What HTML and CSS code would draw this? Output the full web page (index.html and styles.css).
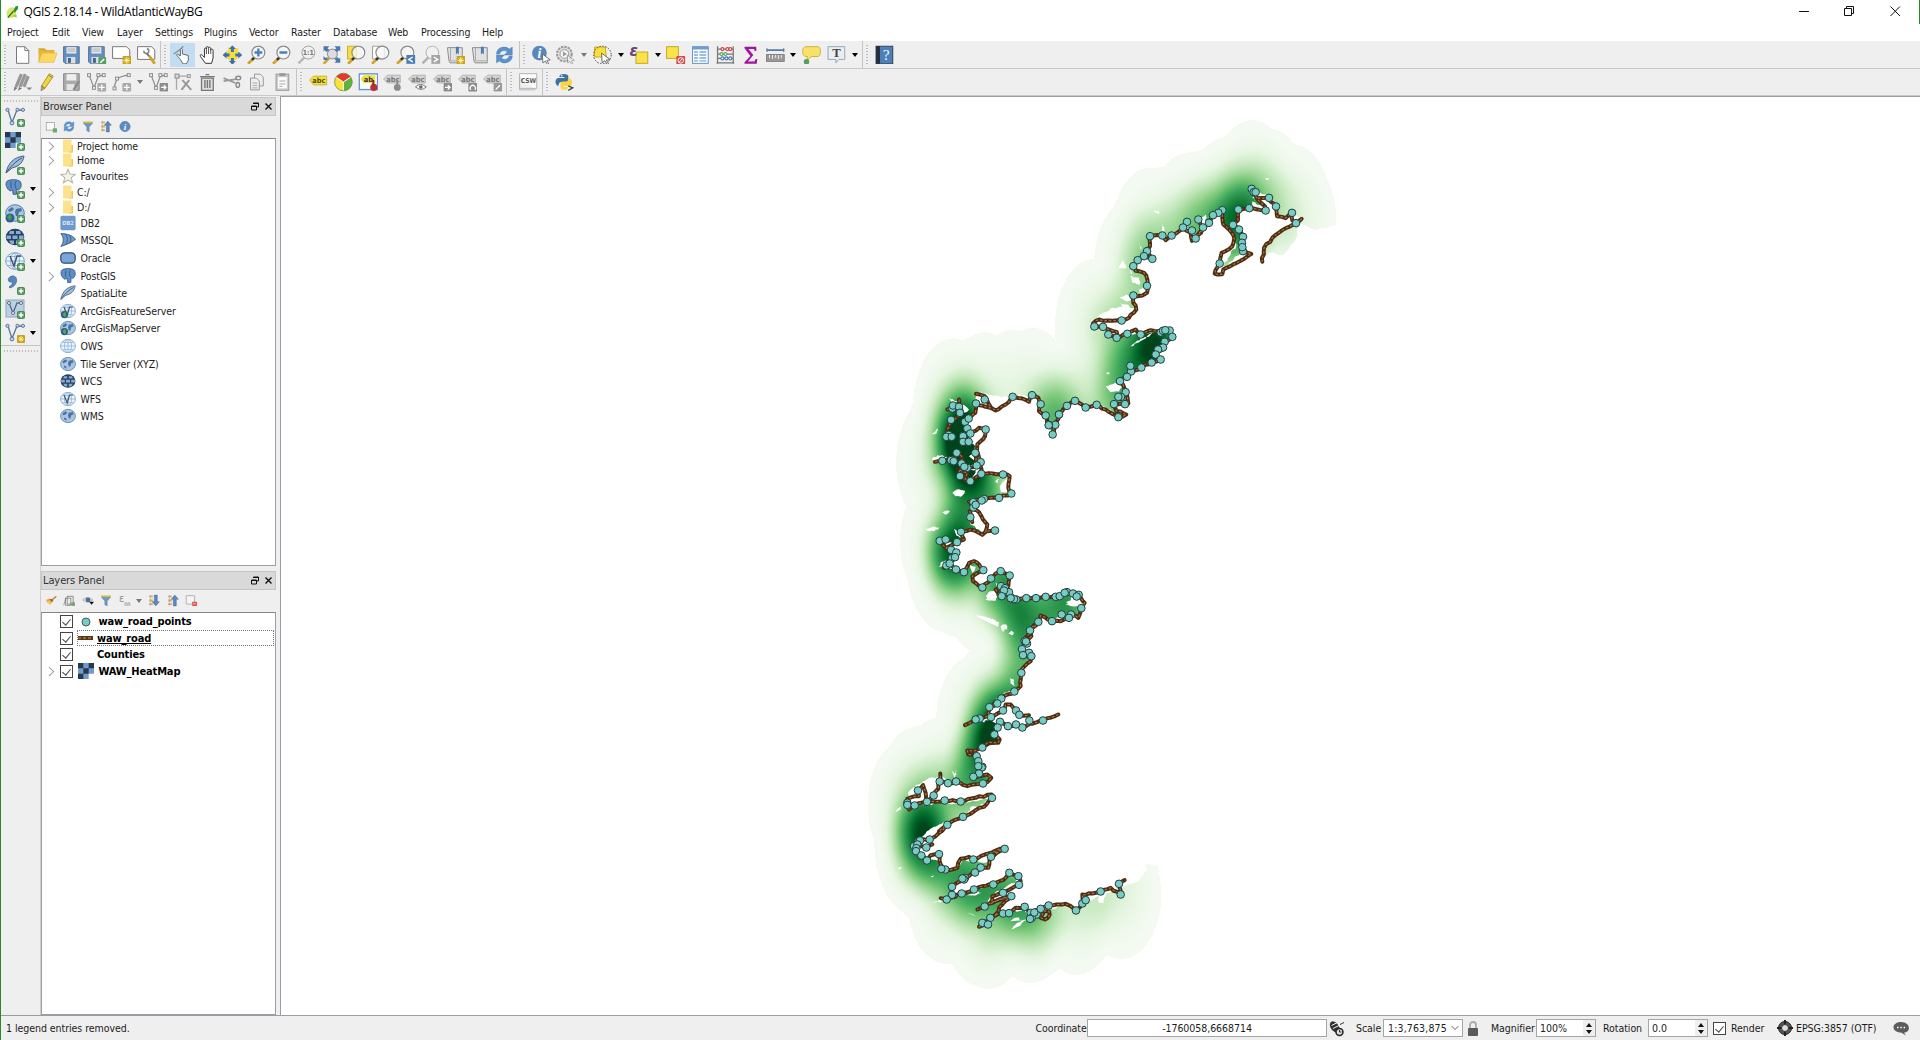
FILE: index.html
```html
<!DOCTYPE html>
<html lang="en">
<head>
<meta charset="utf-8">
<title>QGIS 2.18.14 - WildAtlanticWayBG</title>
<link rel="stylesheet" href="styles.css">
</head>
<body>
<svg class="defs" width="0" height="0" aria-hidden="true">
  <defs>
    <symbol id="b-plus" viewBox="0 0 8 8"><rect x=".5" y=".5" width="7" height="7" rx="1" fill="#5a9e63" stroke="#4b8a54"/><path d="M4 1.600v4.800M1.600 4h4.800" stroke="#fff" stroke-width="1.500"/></symbol>
    <symbol id="b-star" viewBox="0 0 8 8"><rect width="8" height="8" rx="1" fill="#c9a21b"/><path d="M4 1v6M1 4h6M2 2l4 4M6 2L2 6" stroke="#fff3a8" stroke-width=".9"/></symbol>
    <symbol id="b-gray" viewBox="0 0 8 8"><rect width="8" height="8" rx="1" fill="#8d8d8d"/><path d="M1.500 4h4M4 2l2 2-2 2" stroke="#fff" stroke-width="1.200" fill="none"/></symbol>
    <symbol id="b-edit" viewBox="0 0 8 8"><rect width="8" height="8" rx="1" fill="#999"/><path d="M2 6l4-4" stroke="#fff" stroke-width="1.200"/></symbol>
    <symbol id="new" viewBox="0 0 20 20"><path d="M4 1.500h8.500l4 4v13H4z" fill="#fff" stroke="#777"/><path d="M12.500 1.500v4h4" fill="none" stroke="#777"/></symbol>
    <symbol id="open" viewBox="0 0 20 20"><path d="M1 3h6l2 2h8v4H1z" fill="#d9a52a"/><path d="M1 17V5.500h15V17z" fill="#e5b53c"/><path d="M1 17.500L4.500 8H20l-3.500 9.500z" fill="#fbd960" stroke="#e0b040" stroke-width=".6"/></symbol>
    <symbol id="save" viewBox="0 0 20 20"><path d="M2 1.500h16v17H3.500L2 17z" fill="#5f8fc4" stroke="#5b7690"/><rect x="5" y="2" width="10" height="6.500" fill="#e9e9e9"/><path d="M6 4h8M6 6h8" stroke="#aaa"/><rect x="5" y="12" width="9" height="6.500" fill="#ddd"/><rect x="6.500" y="13" width="3" height="5" fill="#44658a"/></symbol>
    <symbol id="saveas" viewBox="0 0 20 20"><use href="#save"/><rect x="12" y="12" width="8" height="8" rx="1" fill="#5a9e63"/><path d="M14 18l4-4" stroke="#fff" stroke-width="1.500"/></symbol>
    <symbol id="compose" viewBox="0 0 20 20"><path d="M1 1.500h14l3.500 3v9H1z" fill="#fff" stroke="#777"/><use href="#b-star" x="11" y="11" width="9" height="9"/></symbol>
    <symbol id="manager" viewBox="0 0 20 20"><path d="M1 1.500h14l3.500 3v10H1z" fill="#fff" stroke="#777"/><path d="M7.500 5.500a2.500 2.500 0 1 0 3-2" fill="none" stroke="#888" stroke-width="1.600"/><path d="M10 8l3 3.500" stroke="#777" stroke-width="2"/><path d="M13 11l5.500 8" stroke="#cfa02e" stroke-width="2.800"/></symbol>
    <symbol id="touch" viewBox="0 0 20 20"><path d="M1 9l6-4 4-4" fill="none" stroke="#8c8c8c" stroke-width="1.300"/><path d="M8 14.500l-4-4.500 1-1 3 2V4.500c0-1.500 2-1.500 2 0v4.500l6 1.500v5l-2 3.500h-3.500z" fill="#fff" stroke="#666"/></symbol>
    <symbol id="pan" viewBox="0 0 20 20"><path d="M8 18.500l-5-7c-1-2 1-2.500 2-1l2 2V4c0-1.500 2-1.500 2 0V2.500c0-1.500 2-1.500 2 0V3c0-1.500 2.300-1.300 2.300.3V5c0-1.300 2.500-1.300 2.500.2V13l-1.500 5.500z" fill="#fff" stroke="#333"/><path d="M9 4v5M11.200 3v6M13.400 5v4" stroke="#555"/></symbol>
    <symbol id="pansel" viewBox="0 0 20 20"><path d="M6 2l10 1-1 11-6 3-6-5z" fill="#f8dd3c"/><g fill="#3c6fae"><path d="M10 0l3.500 4h-2v3h-3V4h-2zM10 20l3.500-4h-2v-3h-3v3h-2zM0 10l4-3.500v2h3v3H4v2zM20 10l-4-3.500v2h-3v3h3v2z"/></g></symbol>
    <symbol id="lens" viewBox="0 0 20 20"><path d="M1.500 19l6-6" stroke="#d3a52c" stroke-width="2.800"/><path d="M5.500 15l2.500-2.500" stroke="#333" stroke-width="2.500"/><circle cx="12" cy="7.500" r="6.600" fill="#f6f6f4" fill-opacity=".8" stroke="#8a8a8a" stroke-width="1.200"/></symbol>
    <symbol id="zin" viewBox="0 0 20 20"><use href="#lens"/><path d="M12 3.500v8M8 7.500h8" stroke="#4b80bd" stroke-width="2.400"/></symbol>
    <symbol id="zout" viewBox="0 0 20 20"><use href="#lens"/><path d="M8 7.500h8" stroke="#4b80bd" stroke-width="2.400"/></symbol>
    <symbol id="z11" viewBox="0 0 20 20"><g opacity=".65"><path d="M2 18.500l6-6" stroke="#999" stroke-width="2.500"/><circle cx="12" cy="7.500" r="6.600" fill="#f0f0f0" stroke="#777"/></g><text x="12" y="10" font-size="7" font-weight="700" fill="#777" text-anchor="middle">1:1</text></symbol>
    <symbol id="zfull" viewBox="0 0 20 20"><path d="M2 19l7-7" stroke="#d3a52c" stroke-width="2.500"/><circle cx="11" cy="9" r="5" fill="#ddd" stroke="#888"/><path d="M2 1h6L6 3l2 2-3 2-2-2-1 2zM19 1h-6l2 2-2 2 3 2 2-2 1 2zM19 18h-6l2-2-2-2 3-2 2 2 1-2zM2 11l2 2 2-1v3H2z" fill="#4878ad"/></symbol>
    <symbol id="zsel" viewBox="0 0 20 20"><rect x="1" y="1" width="9" height="13" fill="#f8de49" stroke="#caae20"/><use href="#lens"/></symbol>
    <symbol id="zlay" viewBox="0 0 20 20"><path d="M2 1h12v13H2z" fill="#fff" stroke="#999"/><use href="#lens"/></symbol>
    <symbol id="zlast" viewBox="0 0 20 20"><use href="#lens"/><rect x="11" y="10" width="9" height="9" fill="#4d7db5"/><path d="M17.500 12l-4 2.500 4 2.500" fill="none" stroke="#fff" stroke-width="1.400"/></symbol>
    <symbol id="znext" viewBox="0 0 20 20"><g opacity=".6"><path d="M2 18.500l6-6" stroke="#888" stroke-width="2.500"/><circle cx="12" cy="7.500" r="6.500" fill="#f2f2f2" stroke="#888"/></g><rect x="11" y="10" width="9" height="9" fill="#a5a5a5"/><path d="M13.500 12l4 2.500-4 2.500" fill="none" stroke="#fff" stroke-width="1.400"/></symbol>
    <symbol id="book" viewBox="0 0 20 20"><path d="M2 2.500h15v15.500H4.500l-1-2L2 4z" fill="#e2e2e2" stroke="#8b8b8b"/><path d="M5 3v13h11" fill="none" stroke="#aaa"/><path d="M10.500 1.500h3v8l-1.500-1.500L10.500 9.500z" fill="#4b7db4"/></symbol>
    <symbol id="booknew" viewBox="0 0 20 20"><use href="#book"/><use href="#b-star" x="11" y="11" width="9" height="9"/></symbol>
    <symbol id="refresh" viewBox="0 0 20 20"><path d="M2 9c0-7 9-9 13-5l3-2v8h-8l3-3c-3-3-7-1-8 2zM18 11c0 7-9 9-13 5l-3 2v-8h8l-3 3c3 3 7 1 8-2z" fill="#5b92cc" stroke="#4a7db5" stroke-width=".5"/></symbol>
    <symbol id="cursor" viewBox="0 0 10 12"><path d="M1 1l8 6-3.500.5 2 3.500-1.500.7-1.800-3.500L1.500 10z" fill="#fff" stroke="#555" stroke-width=".8"/></symbol>
    <symbol id="info" viewBox="0 0 20 20"><circle cx="8" cy="8" r="7.500" fill="#5688bf"/><text x="8" y="13" font-family="Liberation Serif" font-style="italic" font-weight="700" font-size="14" fill="#fff" text-anchor="middle">i</text><use href="#cursor" x="10" y="8" width="10" height="12"/></symbol>
    <symbol id="action" viewBox="0 0 20 20"><circle cx="9" cy="9" r="7.500" fill="#ddd" stroke="#999" stroke-dasharray="2.500 1" stroke-width="2"/><circle cx="9" cy="9" r="4.500" fill="#f5f5f5" stroke="#999"/><path d="M7.500 6.500l4 2.500-4 2.500z" fill="#999"/><use href="#cursor" x="11" y="9" width="9" height="11" opacity=".6"/></symbol>
    <symbol id="select" viewBox="0 0 20 20"><path d="M2 2h11l1 10H2z" fill="#f8df3e" stroke="#c9ac1c"/><circle cx="10" cy="10" r="9" fill="none" stroke="#444" stroke-dasharray="1.500 1.500"/><use href="#cursor" x="8" y="7" width="11" height="13"/></symbol>
    <symbol id="selexp" viewBox="0 0 20 20"><rect x="6.500" y="7" width="12" height="11.500" fill="#fbe14c" stroke="#c6a920"/><text x="0" y="11" font-size="17" font-style="italic" font-weight="700" fill="#69407c">ε</text></symbol>
    <symbol id="desel" viewBox="0 0 20 20"><rect x="1" y="1.500" width="12" height="12" fill="#fbe14c" stroke="#c6a920"/><rect x="11" y="11" width="9" height="9" rx="1" fill="#d9474a"/><circle cx="15.500" cy="15.500" r="2.800" fill="none" stroke="#fff"/><path d="M13.500 17.500l4-4" stroke="#fff"/></symbol>
    <symbol id="table" viewBox="0 0 20 20"><rect x="2" y="1.500" width="16" height="17" fill="#fff" stroke="#5f92c5"/><path d="M2 3h16" stroke="#6c9fd0" stroke-width="3"/><path d="M3.500 7h4M9 7h7M3.500 10h4M9 10h7M3.500 13h4M9 13h7M3.500 16h4M9 16h7" stroke="#7ba9d4" stroke-width="1.500"/></symbol>
    <symbol id="abacus" viewBox="0 0 20 20"><path d="M2 1v18M18 1v18M2 4h16M2 9h16M2 13.500h16M1 18h18" fill="none" stroke="#777" stroke-width="1.300"/><g fill="#fff" stroke-width="1.200"><g stroke="#cc4444"><circle cx="7" cy="4" r="1.500"/><circle cx="12" cy="4" r="1.500"/><circle cx="15" cy="4" r="1.500"/></g><g stroke="#55a868"><circle cx="6" cy="9" r="1.500"/><circle cx="10" cy="9" r="1.500"/></g><g stroke="#477bae"><circle cx="7" cy="13.500" r="1.500"/><circle cx="11" cy="13.500" r="1.500"/><circle cx="15" cy="13.500" r="1.500"/></g></g></symbol>
    <symbol id="sigma" viewBox="0 0 20 20"><path d="M4 1.500h12v4.500h-1.500L13.500 4H8l5 6-5.500 6.500H14l1.500-2.500H17l-.5 5H4v-1.500L10 11 4 3z" fill="#a313a3"/></symbol>
    <symbol id="measure" viewBox="0 0 20 20"><path d="M1 5h18" stroke="#577aa0" stroke-width="1.800"/><path d="M1.500 3v4M18.500 3v4" stroke="#577aa0"/><rect x="1" y="9.500" width="18" height="7" fill="#9a9a9a" stroke="#808080"/><path d="M4 10v3M7 10v4M10 10v3M13 10v4M16 10v3" stroke="#eee"/></symbol>
    <symbol id="tips" viewBox="0 0 20 20"><path d="M4 1.500h13c3 1 3 9 0 10H10l-5 5 1-5H4c-4-1-4-9 0-10z" fill="#f8e16a" stroke="#cdb23d"/><circle cx="5" cy="17" r="2.800" fill="#5b9c5f"/></symbol>
    <symbol id="textann" viewBox="0 0 20 20"><path d="M1.500 1.500h17v13h-6l-3 3.500v-3.500h-8z" fill="#e9eef3" stroke="#98a5b1"/><text x="10" y="12.500" text-anchor="middle" font-family="Liberation Serif" font-weight="700" font-size="13" fill="#444">T</text></symbol>
    <symbol id="help" viewBox="0 0 20 20"><rect x="1.500" y="1" width="17" height="18" fill="#4e7fb8" stroke="#2a3f58"/><rect x="1.500" y="1" width="4" height="18" fill="#26303c"/><text x="12" y="15" text-anchor="middle" font-family="Liberation Serif" font-size="15" fill="#fff">?</text></symbol>
    <symbol id="pencils" viewBox="0 0 20 20"><path d="M3.500 15L9 2M7.500 15L13 2M11.500 15l4.500-11" stroke="#979797" stroke-width="3.200"/><path d="M1 19.500l1-5 3 1.500zM5.500 19l1-4 3 1.500z" fill="#777"/><path d="M14 15.500h6l-3 3z" fill="#888"/></symbol>
    <symbol id="pencil" viewBox="0 0 20 20"><path d="M4 14L12 1.500l4 2.500-8.500 12.500z" fill="#f2d43c" stroke="#a99430"/><path d="M4 14l3.500 2.500L3.500 19z" fill="#d7a05a" stroke="#666" stroke-width=".6"/><path d="M11 3l4 2.500" stroke="#777"/></symbol>
    <symbol id="savegray" viewBox="0 0 20 20"><path d="M2 1.500h16v17H2z" fill="#aaa" stroke="#8e8e8e"/><rect x="5" y="2" width="10" height="6.500" fill="#eee"/><rect x="5" y="12" width="8" height="6.500" fill="#e4e4e4"/><path d="M12 18l6-9" stroke="#888" stroke-width="2"/></symbol>
    <symbol id="vshape" viewBox="0 0 20 20"><path d="M3 4l4.500 12L12 4l5-1" fill="none" stroke="#8e8e8e" stroke-width="1.300"/><g fill="#eee" stroke="#8e8e8e"><rect x="1" y="1.500" width="3" height="3"/><rect x="6" y="14.500" width="3" height="3"/><rect x="10.500" y="1.500" width="3" height="3"/><rect x="16" y="1.500" width="3" height="3"/></g></symbol>
    <symbol id="addf" viewBox="0 0 20 20"><use href="#vshape"/><rect x="11" y="11" width="9" height="9" rx="1.500" fill="#aaa"/><path d="M15.500 12.500v6M12.500 15.500h6" stroke="#fff" stroke-width="1.300"/></symbol>
    <symbol id="addc" viewBox="0 0 20 20"><path d="M3 17C3 8 7 4 17 3" fill="none" stroke="#8e8e8e" stroke-width="1.300"/><g fill="#eee" stroke="#8e8e8e"><rect x="1.500" y="15" width="3" height="3"/><rect x="4" y="5" width="3" height="3"/><rect x="16" y="1.500" width="3" height="3"/></g><rect x="11" y="11" width="9" height="9" rx="1.500" fill="#aaa"/><path d="M15.500 12.500v6M12.500 15.500h6" stroke="#fff" stroke-width="1.300"/></symbol>
    <symbol id="movef" viewBox="0 0 20 20"><use href="#vshape"/><use href="#b-gray" x="11" y="11" width="9" height="9"/></symbol>
    <symbol id="node" viewBox="0 0 20 20"><path d="M3 18V4h14" fill="none" stroke="#aaa" stroke-width="1.400"/><path d="M9 8l9 10M16 8L8 18" fill="none" stroke="#999" stroke-width="2"/><rect x="1.500" y="2" width="4" height="4" fill="#ddd" stroke="#888"/><rect x="14" y="2.500" width="3" height="3" fill="#ddd" stroke="#999"/></symbol>
    <symbol id="trash" viewBox="0 0 20 20"><path d="M4 6h12v12.500H4z" fill="#ddd" stroke="#777" stroke-width="1.300"/><path d="M2.500 4.500h15M8 2.500h4M7.500 8v8M10 8v8M12.500 8v8" stroke="#777" stroke-width="1.400"/></symbol>
    <symbol id="cut" viewBox="0 0 20 20"><path d="M1 6l12 5M1 9l13-2" stroke="#999" stroke-width="1.800"/><ellipse cx="16" cy="6" rx="2.500" ry="1.800" fill="none" stroke="#888" stroke-width="1.400"/><ellipse cx="15.500" cy="13" rx="1.800" ry="2.500" fill="none" stroke="#888" stroke-width="1.400"/></symbol>
    <symbol id="copy" viewBox="0 0 20 20"><path d="M7 2h6l3 3v9H7z" fill="#eee" stroke="#999"/><path d="M3 6h6l3 3v9H3z" fill="#eee" stroke="#999"/><path d="M5 11h5M5 13.500h5M5 16h5" stroke="#aaa"/></symbol>
    <symbol id="paste" viewBox="0 0 20 20"><rect x="3.500" y="2" width="13" height="16.500" fill="#ccc" stroke="#999"/><rect x="5.500" y="5" width="9" height="11.500" fill="#fafafa"/><path d="M7 9h6M7 12h6M7 14.500h3" stroke="#aaa"/><rect x="7" y="1" width="6" height="3" fill="#999"/></symbol>
    <symbol id="label" viewBox="0 0 20 20"><path d="M1 8l4-4h13.500v9H5z" fill="#f4df3d" stroke="#c5ad2a" stroke-width=".8"/><text x="10.500" y="11.500" text-anchor="middle" font-size="7.500" font-weight="700" fill="#554a12">abc</text></symbol>
    <symbol id="diagram" viewBox="0 0 20 20"><circle cx="10" cy="10" r="9" fill="#f6e43a"/><path d="M10 10L2.500 5A9 9 0 0 1 17.500 5z" fill="#e33b2e"/><path d="M10 10v9A9 9 0 0 1 2.500 5z" fill="#5bb441" transform="matrix(-1 0 0 1 20 0)"/><path d="M10 19v-9L2.500 5M10 10l7.500-5" stroke="#fff" fill="none"/><circle cx="10" cy="10" r="9" fill="none" stroke="#7a8c3a" stroke-width=".8"/></symbol>
    <symbol id="labpin" viewBox="0 0 20 20"><rect x=".7" y="1.700" width="18.600" height="16" fill="#fff" stroke="#5f97dc" stroke-width="1.400"/><path d="M2 7l3-4h12v8H5z" fill="#f4df3d"/><text x="10" y="9.500" text-anchor="middle" font-size="7.500" font-weight="700" fill="#333">ab</text><circle cx="15.500" cy="15.500" r="3.600" fill="#bf2d2d"/><path d="M15 8v5" stroke="#8d2222" stroke-width="2"/></symbol>
    <symbol id="labgray" viewBox="0 0 20 20"><path d="M1 7l4-4h13v8H5z" fill="#d2d2d2" stroke="#b5b5b5"/><text x="10.500" y="9.800" text-anchor="middle" font-size="7.500" font-weight="700" fill="#777">abc</text></symbol>
    <symbol id="lg1" viewBox="0 0 20 20"><use href="#labgray"/><circle cx="15" cy="15.500" r="3.500" fill="#8b8b8b"/><path d="M15 8v5" stroke="#8b8b8b" stroke-width="2"/></symbol>
    <symbol id="lg2" viewBox="0 0 20 20"><use href="#labgray"/><path d="M8 15q5-5 11 0q-5 5-11 0z" fill="#fff" stroke="#777"/><circle cx="13.500" cy="15" r="1.800" fill="#666"/></symbol>
    <symbol id="lg3" viewBox="0 0 20 20"><use href="#labgray"/><use href="#b-gray" x="11" y="11" width="9" height="9"/></symbol>
    <symbol id="lg4" viewBox="0 0 20 20"><use href="#labgray"/><rect x="11" y="11" width="9" height="9" rx="1" fill="#8d8d8d"/><path d="M13.500 18a2.700 2.700 0 1 1 4 0" fill="none" stroke="#fff" stroke-width="1.300"/></symbol>
    <symbol id="lg5" viewBox="0 0 20 20"><use href="#labgray"/><use href="#b-edit" x="11" y="11" width="9" height="9"/></symbol>
    <symbol id="csw" viewBox="0 0 20 20"><path d="M1 4v14h16M1 1.500h17.500v15H1z" fill="#fdfdfd" stroke="#b2b2b2"/><text x="10" y="11.500" text-anchor="middle" font-size="6.800" font-weight="700" fill="#555">CSW</text></symbol>
    <symbol id="python" viewBox="0 0 20 20"><path d="M5 4c0-3 9-3 9 0v4c0 2-1.500 2-3 2H7c-2 0-3 1.500-3 4-4 0-4-8 0-8h6V5H5z" fill="#3a72a6"/><path d="M14 6c5 0 5 8 1 8h-6v1h5c0 4-8 4-8 0v-3c0-2 1-2.500 3-2.500h3c2 0 2-2 2-3.500z" fill="#fcd441"/><circle cx="7.300" cy="3.600" r=".8" fill="#fff"/><path d="M14 14l4.500 2-4.500 2.500" fill="none" stroke="#444" stroke-width="1.300"/></symbol>
    <symbol id="vec" viewBox="0 0 20 20"><path d="M3 3l4 12.500L12 3h6" fill="none" stroke="#5a7690" stroke-width="1.300"/><g fill="#bcd3ea" stroke="#4d6f92" stroke-width=".9"><circle cx="2.500" cy="2.800" r="1.600"/><circle cx="7" cy="16" r="1.900"/><circle cx="12.500" cy="2.800" r="1.600"/><circle cx="18" cy="2.800" r="1.600"/></g></symbol>
    <symbol id="a-vec" viewBox="0 0 20 20"><use href="#vec"/><use href="#b-plus" x="12" y="12" width="8" height="8"/></symbol>
    <symbol id="ras" viewBox="0 0 15 15"><path d="M0 0h15v10h-5v5H0z" fill="#6f9bcd"/><path d="M0 0h5v5H0zM10 0h5v5h-5zM5 5h5v5H5zM0 10h5v5H0z" fill="#27384c"/></symbol>
    <symbol id="a-ras" viewBox="0 0 20 20"><use href="#ras" x="0" y="1" width="16" height="16"/><use href="#b-plus" x="12" y="12" width="8" height="8"/></symbol>
    <symbol id="feather" viewBox="0 0 20 20"><path d="M1 18C3 8 9 2 19 1c-1 6-4 10-12 12z" fill="#9dbddd" stroke="#3f5f82"/><path d="M1 18C5 12 11 6 17 3" fill="none" stroke="#38506c"/></symbol>
    <symbol id="a-fea" viewBox="0 0 20 20"><use href="#feather"/><use href="#b-plus" x="12" y="12" width="8" height="8"/></symbol>
    <symbol id="pg" viewBox="0 0 20 20"><path d="M2 3c3-3 13-3 16 0 2 4 1 8-2 10l-2-1-.5 6h-4l-.5-5-3 1C2 12 0 6 2 3z" fill="#5e8fc6" stroke="#34557b"/><path d="M7 3v8M13 2.500c-2 3-1 6 0 9" fill="none" stroke="#34557b"/></symbol>
    <symbol id="a-pg" viewBox="0 0 20 20"><use href="#pg" width="17" height="17"/><use href="#b-plus" x="12" y="12" width="8" height="8"/></symbol>
    <symbol id="globe" viewBox="0 0 20 20"><ellipse cx="10" cy="10" rx="9.300" ry="8.300" fill="#a9c6e4" stroke="#5780aa"/><path d="M3 7l4-3 2 2-2 2-3 1zM11 6l5-1 1 3-3 1-1 4-2 0-1-4zM5 12l3 1v3l-3-2z" fill="#4b739e"/></symbol>
    <symbol id="grid" viewBox="0 0 20 20"><ellipse cx="10" cy="10" rx="9.300" ry="8.300" fill="#edf4fb" stroke="#6f9fd0"/><path d="M1 10h18M10 2v16M3 5.500h14M3 14.500h14" stroke="#8db4dc" fill="none"/><ellipse cx="10" cy="10" rx="4.500" ry="8.300" fill="none" stroke="#8db4dc"/></symbol>
    <symbol id="wcs" viewBox="0 0 20 20"><ellipse cx="10" cy="10" rx="9.300" ry="8.300" fill="#27415e"/><path d="M5 4h4v3H4zM11 4h4l1 3h-5zM1.500 8.500H6v3.500H1.500zM7.500 8.500h5V12h-5zM14 8.500h4.500V12H14zM4 13.500h5V17H6zM11 13.500h5L14 17h-3z" fill="#86abd4"/></symbol>
    <symbol id="a-wms" viewBox="0 0 20 20"><use href="#globe"/><circle cx="5" cy="15" r="4.500" fill="#2a6098"/><path d="M2 14l3-3 2 3-2 4z" fill="#4b9c45"/><use href="#b-plus" x="12" y="12" width="8" height="8"/></symbol>
    <symbol id="a-wcs" viewBox="0 0 20 20"><use href="#wcs"/><use href="#b-plus" x="12" y="12" width="8" height="8"/></symbol>
    <symbol id="wfs" viewBox="0 0 20 20"><use href="#grid"/><path d="M5 5l4 10 3-10h4" fill="none" stroke="#40556d" stroke-width="1.500"/></symbol>
    <symbol id="a-wfs" viewBox="0 0 20 20"><use href="#wfs"/><use href="#b-plus" x="12" y="12" width="8" height="8"/></symbol>
    <symbol id="a-csv" viewBox="0 0 20 20"><path d="M7 1c6-1 7 9-2 12l-1-1c3-2 4-4 3-5C2 8 2 2 7 1z" fill="#5686bd" stroke="#3d638f" stroke-width=".7"/><use href="#b-plus" x="12" y="12" width="8" height="8"/></symbol>
    <symbol id="a-vir" viewBox="0 0 20 20"><rect x="1" y="1" width="18" height="17" fill="#bdd0e3" stroke="#8fa5bb"/><path d="M4 4l4 10 4-10h4" fill="none" stroke="#516b86" stroke-width="1.300"/><g fill="#fff" stroke="#516b86"><circle cx="4" cy="4" r="1.500"/><circle cx="8" cy="14" r="1.500"/><circle cx="16" cy="4" r="1.500"/></g><use href="#b-plus" x="12" y="12" width="8" height="8"/></symbol>
    <symbol id="a-new" viewBox="0 0 20 20"><use href="#vec"/><use href="#b-star" x="12" y="12" width="8" height="8"/></symbol>
    <symbol id="arcm" viewBox="0 0 20 20"><use href="#globe"/><circle cx="5.500" cy="14.500" r="4.500" fill="#2a5f88"/><path d="M3 14l3-3 2 3-2 4z" fill="#57a650"/></symbol>
    <symbol id="arcf" viewBox="0 0 20 20"><use href="#wfs"/><circle cx="5.500" cy="14.500" r="4.500" fill="#2a5f88"/><path d="M3 14l3-3 2 3-2 4z" fill="#57a650"/></symbol>
    <symbol id="folder" viewBox="0 0 16 14"><path d="M4 .5h8.500V6h1.500v7.500H4z" fill="#fbe38c"/><path d="M12.500 6H14v7.500h-4v-1h2.500z" fill="#efc85a"/></symbol>
    <symbol id="star" viewBox="0 0 20 20"><path d="M10 1.500l2.500 6 6.500.5-5 4 1.700 6.500L10 15l-5.700 3.500L6 12 1 8l6.500-.5z" fill="#f4f3ea" stroke="#b9b79f" stroke-width="1.300"/></symbol>
    <symbol id="db2" viewBox="0 0 20 20"><rect x=".5" y="1" width="19" height="18" rx="2" fill="#6c98cc"/><text x="10" y="12.500" text-anchor="middle" font-size="7" font-weight="700" fill="#d8e5f3">DB2</text></symbol>
    <symbol id="mssql" viewBox="0 0 20 20"><path d="M1 2c8 0 14 2 18.500 7C15 13 8 16 1 18c4-5 4-11 0-16z" fill="#6c98cc" stroke="#34506f"/><path d="M7 3c3 4 3 9 0 13M12 5c2 3 2 6 0 9" fill="none" stroke="#34506f"/></symbol>
    <symbol id="oracle" viewBox="0 0 20 20"><rect x="1" y="3.500" width="18" height="13" rx="4.500" fill="#7aa5d6" stroke="#2e4c6e" stroke-width="1.500"/></symbol>
    <symbol id="addlay" viewBox="0 0 20 20"><rect x="2" y="3" width="14" height="13" fill="#fafafa" stroke="#888"/><rect x="13" y="13" width="7" height="7" fill="#6ba872"/></symbol>
    <symbol id="filter" viewBox="0 0 20 20"><path d="M2 4h16l-6 7v8l-4-2v-6z" fill="#6b99cc" stroke="#55799f" stroke-width=".7"/><path d="M2 3h16" stroke="#d2c23a" stroke-width="3"/></symbol>
    <symbol id="collapse" viewBox="0 0 20 20"><path d="M2 3h6M2 16h6M2 10h6" stroke="#d9a94c" stroke-width="3"/><path d="M4 1v18" stroke="#aaa"/><path d="M13 1l6 7h-3.500v11h-5V8H7z" fill="#5b88bd" stroke="#3c618c" stroke-width=".7"/></symbol>
    <symbol id="expand" viewBox="0 0 20 20"><path d="M2 3h6M2 16h6M2 10h6" stroke="#d9a94c" stroke-width="3"/><path d="M4 1v18" stroke="#aaa"/><path d="M13 19l6-7h-3.500V1h-5v11H7z" fill="#5b88bd" stroke="#3c618c" stroke-width=".7"/></symbol>
    <symbol id="infos" viewBox="0 0 20 20"><circle cx="10" cy="10" r="8.500" fill="#5b8cc3" stroke="#426d9d"/><text x="10" y="15" font-family="Liberation Serif" font-style="italic" font-weight="700" font-size="15" fill="#fff" text-anchor="middle">i</text></symbol>
    <symbol id="brush" viewBox="0 0 20 20"><path d="M1 9l6-2 5 5-3 5z" fill="#f0a13a"/><path d="M2 13l5 3 4-1-3-5z" fill="#e8cf4b"/><path d="M7 8l4-1 3 3-2 3z" fill="#c7504c"/><path d="M12 9l7-6" stroke="#b98a45" stroke-width="2.500"/></symbol>
    <symbol id="group" viewBox="0 0 20 20"><path d="M7 3h10v13H7zM4 6h9v12H4z" fill="#eee" stroke="#777" stroke-width="1.300"/><path d="M1 18l4-12" stroke="#777"/><rect x="14" y="13" width="6" height="6" fill="#6ba872"/></symbol>
    <symbol id="eye" viewBox="0 0 20 20"><path d="M1 9q8-8 17 0q-8 8-17 0z" fill="#ddd" stroke="#999"/><circle cx="10" cy="9" r="4" fill="#4e7398"/><path d="M12 12h8l-4 5z" fill="#111"/></symbol>
    <symbol id="eps" viewBox="0 0 20 20"><text x="0" y="12" font-size="18" fill="#888">ε</text><path d="M10 19v-5h3v5M15 19v-5h3v5" fill="none" stroke="#999" stroke-width="1.300"/></symbol>
    <symbol id="remove" viewBox="0 0 20 20"><rect x="2" y="2" width="14" height="14" rx="1" fill="#f4f4f4" stroke="#888"/><rect x="12" y="12" width="8" height="7" rx="1" fill="#e0504f"/><path d="M13.500 15.500h5" stroke="#fff"/></symbol>
  </defs>
</svg>

<div class="window">
  <header class="title">
    <svg class="logo" viewBox="0 0 20 20"><ellipse cx="9" cy="11" rx="6.500" ry="8" fill="#d7e76a" transform="rotate(25 9 11)"/><path d="M4 18l8-9" stroke="#2d6b2a" stroke-width="2"/><path d="M12 8l3-6 4-1-1 5-4 5z" fill="#2f8b2c"/><path d="M9 16l7-3 1 5z" fill="#a9cc45"/></svg>
    <span class="title-text">QGIS 2.18.14 - WildAtlanticWayBG</span>
    <svg class="winbtns" viewBox="0 0 110 24" fill="none" stroke="#111"><path d="M4 11.500h10"/><path d="M49.500 8.500h7v7h-7zM51.500 8.500v-2h7v7h-2"/><path d="M95.500 6.500l9.500 9.500M105 6.500l-9.500 9.500"/></svg>
  </header>
  <nav class="menu"><span class="m1">Project</span><span class="m2">Edit</span><span class="m3">View</span><span class="m4">Layer</span><span class="m5">Settings</span><span class="m6">Plugins</span><span class="m7">Vector</span><span class="m8">Raster</span><span class="m9">Database</span><span class="m10">Web</span><span class="m11">Processing</span><span>Help</span></nav>

  <div class="bar">
    <div class="grp"><i class="grip"></i><svg class="ic"><use href="#new"/></svg><svg class="ic"><use href="#open"/></svg><svg class="ic"><use href="#save"/></svg><svg class="ic"><use href="#saveas"/></svg><svg class="ic"><use href="#compose"/></svg><svg class="ic"><use href="#manager"/></svg></div>
    <div class="grp"><i class="grip"></i><svg class="ic on"><use href="#touch"/></svg><svg class="ic"><use href="#pan"/></svg><svg class="ic"><use href="#pansel"/></svg><svg class="ic"><use href="#zin"/></svg><svg class="ic"><use href="#zout"/></svg><svg class="ic"><use href="#z11"/></svg><svg class="ic"><use href="#zfull"/></svg><svg class="ic"><use href="#zsel"/></svg><svg class="ic"><use href="#zlay"/></svg><svg class="ic"><use href="#zlast"/></svg><svg class="ic"><use href="#znext"/></svg><svg class="ic"><use href="#booknew"/></svg><svg class="ic"><use href="#book"/></svg><svg class="ic"><use href="#refresh"/></svg></div>
    <div class="grp"><i class="grip"></i><svg class="ic"><use href="#info"/></svg><svg class="ic"><use href="#action"/></svg><i class="dd dim"></i><svg class="ic"><use href="#select"/></svg><i class="dd"></i><svg class="ic"><use href="#selexp"/></svg><i class="dd"></i><svg class="ic"><use href="#desel"/></svg><svg class="ic"><use href="#table"/></svg><svg class="ic"><use href="#abacus"/></svg><svg class="ic"><use href="#sigma"/></svg><svg class="ic"><use href="#measure"/></svg><i class="dd"></i><svg class="ic"><use href="#tips"/></svg><svg class="ic"><use href="#textann"/></svg><i class="dd"></i></div>
    <div class="grp last"><i class="grip"></i><svg class="ic"><use href="#help"/></svg></div>
  </div>
  <div class="bar">
    <div class="grp"><i class="grip"></i><svg class="ic"><use href="#pencils"/></svg><svg class="ic"><use href="#pencil"/></svg><svg class="ic"><use href="#savegray"/></svg><svg class="ic"><use href="#addf"/></svg><svg class="ic"><use href="#addc"/></svg><i class="dd dim"></i><svg class="ic"><use href="#movef"/></svg><svg class="ic"><use href="#node"/></svg><svg class="ic"><use href="#trash"/></svg><svg class="ic"><use href="#cut"/></svg><svg class="ic"><use href="#copy"/></svg><svg class="ic"><use href="#paste"/></svg></div>
    <div class="grp"><i class="grip"></i><svg class="ic"><use href="#label"/></svg><svg class="ic"><use href="#diagram"/></svg><svg class="ic"><use href="#labpin"/></svg><svg class="ic"><use href="#lg1"/></svg><svg class="ic"><use href="#lg2"/></svg><svg class="ic"><use href="#lg3"/></svg><svg class="ic"><use href="#lg4"/></svg><svg class="ic"><use href="#lg5"/></svg></div>
    <div class="grp"><i class="grip"></i><svg class="ic"><use href="#csw"/></svg></div>
    <div class="grp last"><i class="grip"></i><svg class="ic"><use href="#python"/></svg></div>
  </div>

  <main class="body">
    <aside class="side">
      <i class="hgrip"></i>
      <div class="si"><svg><use href="#a-vec"/></svg></div><div class="si"><svg><use href="#a-ras"/></svg></div><div class="si"><svg><use href="#a-fea"/></svg></div><div class="si"><svg><use href="#a-pg"/></svg><i class="dd"></i></div><div class="si"><svg><use href="#a-wms"/></svg><i class="dd"></i></div><div class="si"><svg><use href="#a-wcs"/></svg></div><div class="si"><svg><use href="#a-wfs"/></svg><i class="dd"></i></div><div class="si"><svg><use href="#a-csv"/></svg></div><div class="si"><svg><use href="#a-vir"/></svg></div><div class="si"><svg><use href="#a-new"/></svg><i class="dd"></i></div>
      <i class="rule"></i><i class="hgrip"></i>
    </aside>
    <div class="docks">
      <section class="dock browser">
        <h2>Browser Panel<svg class="dockbtns" viewBox="0 0 24 10"><path d="M2.500 1h5v4h-1.500M.5 4h5v4h-5zM0 4.500h6M2 1.500h6" fill="none" stroke="#111"/><path d="M14.500 1.500l6 6M20.500 1.500l-6 6" stroke="#111" stroke-width="1.400"/></svg></h2>
        <div class="tools"><svg><use href="#addlay"/></svg><svg><use href="#refresh"/></svg><svg><use href="#filter"/></svg><svg><use href="#collapse"/></svg><svg><use href="#infos"/></svg></div>
        <ul class="tree">
          <li class="f x"><svg><use href="#folder"/></svg>Project home</li>
          <li class="f x"><svg><use href="#folder"/></svg>Home</li>
          <li><svg><use href="#star"/></svg>Favourites</li>
          <li class="f x"><svg><use href="#folder"/></svg>C:/</li>
          <li class="f x"><svg><use href="#folder"/></svg>D:/</li>
          <li><svg><use href="#db2"/></svg>DB2</li>
          <li><svg><use href="#mssql"/></svg>MSSQL</li>
          <li><svg><use href="#oracle"/></svg>Oracle</li>
          <li class="x"><svg><use href="#pg"/></svg>PostGIS</li>
          <li><svg><use href="#feather"/></svg>SpatiaLite</li>
          <li><svg><use href="#arcf"/></svg>ArcGisFeatureServer</li>
          <li><svg><use href="#arcm"/></svg>ArcGisMapServer</li>
          <li><svg><use href="#grid"/></svg>OWS</li>
          <li><svg><use href="#globe"/></svg>Tile Server (XYZ)</li>
          <li><svg><use href="#wcs"/></svg>WCS</li>
          <li><svg><use href="#wfs"/></svg>WFS</li>
          <li><svg><use href="#globe"/></svg>WMS</li>
        </ul>
      </section>
      <section class="dock layers">
        <h2>Layers Panel<svg class="dockbtns" viewBox="0 0 24 10"><path d="M2.500 1h5v4h-1.500M.5 4h5v4h-5zM0 4.500h6M2 1.500h6" fill="none" stroke="#111"/><path d="M14.500 1.500l6 6M20.500 1.500l-6 6" stroke="#111" stroke-width="1.400"/></svg></h2>
        <div class="tools"><svg><use href="#brush"/></svg><svg><use href="#group"/></svg><svg><use href="#eye"/></svg><svg><use href="#filter"/></svg><svg><use href="#eps"/></svg><i class="dd dim"></i><svg><use href="#expand"/></svg><svg><use href="#collapse"/></svg><svg><use href="#remove"/></svg></div>
        <ul class="tree lay">
          <li><i class="cb"></i><div class="lrow"><svg class="sym" viewBox="0 0 16 16"><circle cx="8" cy="8" r="4" fill="#78cdc3" stroke="#3e5f60"/></svg>waw_road_points</div></li>
          <li><i class="cb"></i><div class="lrow cur"><svg class="sym road" viewBox="0 0 15 16"><path d="M0 8h15" stroke="#5a3413" stroke-width="4"/><path d="M0 8h15" stroke="#c79b6e" stroke-dasharray="3 2"/></svg><u>waw_road</u></div></li>
          <li><i class="cb"></i><div class="lrow nosym">Counties</div></li>
          <li class="x"><i class="cb"></i><div class="lrow"><svg class="sym"><use href="#ras"/></svg>WAW_HeatMap</div></li>
        </ul>
      </section>
    </div>
    <div class="map"><canvas id="map" width="1639" height="918"></canvas></div>
  </main>

  <footer class="status">
    <span class="msg">1 legend entries removed.</span>
    <span class="s-coord">Coordinate</span><span class="field f-coord">-1760058,6668714</span>
    <svg class="s-mouse" viewBox="0 0 16 16"><ellipse cx="5.500" cy="6" rx="4" ry="6" transform="rotate(-35 6 6)" fill="#333"/><path d="M2.500 5l6-3M4 8l6-3" stroke="#eee"/><circle cx="10.500" cy="11.500" r="3.500" fill="#ddd" stroke="#222" stroke-width="1.500"/><path d="M11 4l4-2M10.500 9.500v2h2" stroke="#333" fill="none"/></svg>
    <span class="s-scale">Scale</span><span class="field f-scale">1:3,763,875<svg viewBox="0 0 8 6"><path d="M.5 1L4 4.500 7.500 1" fill="none" stroke="#666"/></svg></span>
    <svg class="s-lock" viewBox="0 0 12 16"><path d="M3 8V4.500a3 3 0 0 1 6 0V8" fill="none" stroke="#aaa" stroke-width="1.800"/><rect x="1" y="7.500" width="10" height="8" rx="1" fill="#5b5b5b"/></svg>
    <span class="s-mag">Magnifier</span><span class="field f-spin">100%<i class="spin"></i></span>
    <span class="s-rot">Rotation</span><span class="field f-spin f-rot">0.0<i class="spin"></i></span>
    <i class="cb"></i><span class="s-render">Render</span>
    <svg class="s-crs" viewBox="0 0 16 16"><circle cx="8" cy="8" r="6.500" fill="#555" stroke="#222"/><path d="M8 0v16M0 8h16" stroke="#222" stroke-width="2"/><circle cx="8" cy="8" r="3.500" fill="#ddd" stroke="#333"/></svg>
    <span class="s-epsg">EPSG:3857 (OTF)</span>
    <svg class="s-bubble" viewBox="0 0 16 14"><path d="M8 .5c10 0 10 10.500 3 10.500l2 3-5-3C-2 11-2 .5 8 .5z" fill="#5c5c5c"/><path d="M4 6h1.500M7.300 6h1.500M10.600 6h1.500" stroke="#fff" stroke-width="1.500"/></svg>
  </footer>
</div>
<script src="map.js"></script>
</body>
</html>
```

FILE: styles.css
```css
* { box-sizing: border-box; }
body { margin: 0; font-family: "DejaVu Sans Condensed", "DejaVu Sans", sans-serif; font-stretch: condensed; font-size: 10.5px; color: #1c1c1c; background: #fff; overflow: hidden; }
.defs { position: absolute; }
i { font-style: normal; }
.window { width: 1920px; height: 1040px; display: flex; flex-direction: column; border-left: 1px solid #2a8a2a; background: #fff; }

.title { height: 24px; display: flex; align-items: center; padding-left: 4px; border-right: 1px solid #2a8a2a; }
.logo { width: 14px; height: 16px; margin-right: 4.500px; }
.title-text { font-family: "Open Sans", sans-serif; font-stretch: normal; font-size: 12px; letter-spacing: -0.3px; color: #000; white-space: nowrap; padding-bottom: 1px; }
.winbtns { width: 110px; height: 24px; margin-left: auto; margin-right: 14px; }

.menu { height: 17px; display: flex; align-items: center; padding: 0 0 2px 6px; }
.menu span { flex: none; white-space: nowrap; letter-spacing: -0.1px; }
.m1 { width: 45px; } .m2 { width: 30px; } .m3 { width: 35px; } .m4 { width: 38px; } .m5 { width: 49px; } .m6 { width: 45px; }
.m7 { width: 42px; } .m8 { width: 42px; } .m9 { width: 55px; } .m10 { width: 33px; } .m11 { width: 61px; }

.bar { height: 27.500px; background: #efefef; border-bottom: 1px solid #c9c9c9; display: flex; }
.grp { display: flex; align-items: center; height: 27px; border-right: 1px solid #c4c4c4; padding: 0 1.500px 0 3px; }
.grp.last { border-right: 0; }
.grip { width: 2px; height: 20px; margin-right: 3.900px; background: repeating-linear-gradient(#bdbdbd 0 1px, #efefef 1px 3px); }
.ic { width: 24.800px; height: 24px; padding: 2.200px; flex: none; }
.ic.on { background: #c1dcf3; }
.dd { width: 11.900px; flex: none; display: flex; justify-content: center; }
.dd::after { content: ""; border: 3.500px solid transparent; border-top: 4px solid #000; border-bottom: 0; }
.dd.dim::after { border-top-color: #777; }

.body { flex: 1; display: flex; min-height: 0; background: #efefef; }
.side { width: 40px; flex: none; border-right: 1px solid #cfcfcf; padding-top: 4px; }
.hgrip { display: block; width: 34px; height: 2px; margin: 0 0 3px 3px; background: repeating-linear-gradient(90deg, #bdbdbd 0 1px, #efefef 1px 3px); }
.si { height: 24.050px; display: flex; align-items: center; padding-left: 4px; }
.si svg { width: 20px; height: 20px; margin-right: 2px; }
.rule { display: block; height: 1px; background: #c4c4c4; margin-bottom: 4px; }

.docks { width: 235px; flex: none; display: flex; flex-direction: column; padding-top: 1px; }
.dock { display: flex; flex-direction: column; }
.browser { height: 468.500px; margin-bottom: 5.500px; }
.layers { flex: 1; min-height: 0; }
.dock h2 { margin: 0; height: 19px; flex: none; font-size: 11px; font-weight: 400; color: #333; background: #d9d9d9; border: 1px solid #c6c6c6; display: flex; align-items: center; padding-left: 1px; letter-spacing: -0.1px; }
.dockbtns { width: 24px; height: 10px; margin-left: auto; }
.tools { height: 21.500px; flex: none; display: flex; align-items: center; padding-left: 4px; gap: 6.400px; }
.tools svg { width: 12px; height: 13px; flex: none; }
.tools .dd { width: 8px; margin: 0 -1.500px; }
.tree { list-style: none; margin: 0; padding: 0; flex: 1; background: #fff; border: 1px solid #9a9da3; border-top-color: #82868d; }
.tree li { height: 17.600px; display: flex; align-items: center; padding-left: 18px; white-space: nowrap; letter-spacing: -0.08px; position: relative; }
.tree li svg { width: 16px; height: 16px; margin-right: 4.500px; flex: none; }
.tree li.f { height: 14.500px; }
.tree li.f svg { width: 16px; height: 14px; margin-right: 2px; margin-left: -1px; }
.x::before { content: ""; position: absolute; left: 4px; top: calc(50% - 3px); width: 5.500px; height: 5.500px; border: solid #999; border-width: 1.400px 1.400px 0 0; transform: rotate(45deg); }
.lay { padding-top: 1px; }
.lay li { height: 16.450px; font-weight: 700; color: #000; font-size: 11px; letter-spacing: -0.15px; }
.cb { width: 13px; height: 13px; border: 1px solid #444; background: #fff; display: flex; justify-content: center; flex: none; }
.cb::after { content: ""; width: 4px; height: 7px; margin-top: 1px; border: solid #444; border-width: 0 1.200px 1.200px 0; transform: rotate(40deg); }
.lrow { flex: 1; height: 16px; display: flex; align-items: center; margin-left: 5px; margin-right: 1px; }
.lrow.cur { border: 1px dotted #777; margin-left: 4px; }
.tree .road { width: 15px; margin-right: 4px; }
.nosym { padding-left: 19px; }

.map { margin-left: 4px; flex: 1; border-left: 1px solid #9a9da3; border-top: 1px solid #9a9da3; background: #fff; overflow: hidden; }
.map canvas { display: block; }

.status { height: 25px; flex: none; background: #efefef; border-top: 1px solid #9a9da3; display: flex; align-items: center; padding: 0 9px 0 5px; white-space: nowrap; letter-spacing: -0.05px; }
.status > * { flex: none; }
.msg { width: 1029.500px; }
.s-coord { width: 51.500px; }
.field { height: 18px; border: 1px solid #a5a5a5; background: #fff; display: flex; align-items: center; padding-left: 4px; }
.f-coord { width: 240px; justify-content: center; padding: 0; }
.s-mouse { width: 16px; height: 17px; margin: 0 11px 0 2px; }
.s-scale { width: 27px; }
.f-scale { width: 80px; letter-spacing: .15px; }
.f-scale svg { width: 8px; height: 6px; margin-left: auto; margin-right: 3px; }
.s-lock { width: 12px; height: 17px; margin: 0 12px 0 4px; }
.s-mag { width: 45px; }
.f-spin { width: 60px; padding-left: 3px; }
.spin { margin-left: auto; width: 12px; height: 16px; background: #efefef; display: flex; flex-direction: column; align-items: center; justify-content: center; gap: 3px; }
.spin::before { content: ""; border: 3px solid transparent; border-bottom: 4px solid #111; border-top: 0; }
.spin::after { content: ""; border: 3px solid transparent; border-top: 4px solid #111; border-bottom: 0; }
.s-rot { width: 45px; margin-left: 7px; }
.f-rot { margin-right: 5px; }
.s-render { width: 46px; margin-left: 5px; }
.s-crs { width: 16px; height: 16px; margin-right: 3px; }
.s-epsg { width: 97px; }
.s-bubble { width: 16px; height: 15px; }
```

FILE: map.js
```js
// Map canvas: heatmap raster, county polygons, road line and road points.
// Coordinates are stored in thirds of a pixel, relative to each tile's origin.
const canvas = document.getElementById('map');
const ctx = canvas.getContext('2d');
const OX = 282, OY = 97.5;

const tiles = [
  { x: 1040, y: 100,
    land: ['970 380 882 378 830 392 800 378 775 376 775 410 735 465 690 460 668 485 680 440 710 405 771 372 788 358 762 340 740 355 718 345 715 318 692 290 650 275 640 295 662 300 670 322 640 306 640 320 598 328 595 360 582 376 600 390 612 412 608 440 612 455 590 470 560 500 550 500 575 465 592 440 570 390 553 375 548 335 522 347 510 370 492 384 470 417 459 392 432 382 398 406 380 420 370 406 333 408 335 440 324 455 338 470 300 480 283 500 320 520 328 555 300 570 300 590 283 588 292 630 270 622 220 625 178 650 165 665 166 680 192 682 233 715 265 703 305 705 360 695 392 693 400 712 377 727 372 744 350 765 365 780 338 790 307 804 276 816 264 832 243 845 260 878 268 912 225 914 262 945 238 953 173 916 140 924 108 904 84 920 60 945 41 1005 41 1120 970 1120',
      '330 712 305 715 280 735 275 742 300 728 340 700', '345 332 362 341 358 343 346 336', '252 480 262 500 262 506 238 506', '275 528 300 535 302 556 280 550', '240 592 262 585 278 600 262 606', '244 610 268 616 276 632 250 620', '200 860 228 850 250 862 240 876 215 878', '185 920 215 930 240 950', '680 236 689 236 689 241 680 241', '203 819 211 819 211 824 203 824', '470 370 500 345 500 380', '272 506 280 522 276 525', '300 430 308 445 306 452', '372 372 376 395 368 395'],
    road: ['638 268 650 278 656 300 678 320 678 333 640 326 598 330 597 362 582 376 600 390 612 412 606 436 612 455 637 463 605 484 553 510 550 524 527 522 542 492 548 460 580 440 586 416 570 390 553 375 550 332 522 347 510 370 492 384 486 400 470 417 459 424 455 400 432 384 398 408 380 422 370 408 333 410 333 440 324 455 340 478 315 470 296 482 283 500 290 514 315 520 325 540 324 580 310 588 283 588 283 610 292 630 270 655 248 663 220 664 180 660 162 672 166 680 192 682 210 690 233 697 233 715 208 705 233 715 265 703 290 690 305 705 335 692 360 695 392 693 400 712 377 727 372 744 350 765 365 780 338 790 307 804 276 816 264 832 243 845 260 878 268 912 225 914 232 935 262 945 238 953 200 930 173 916 140 924 108 904 84 920 60 945 41 1005', '656 296 690 295 711 321 714 350 740 356 759 340 760 362 771 372 788 358 730 392 700 415 675 445 670 487', '478 360 492 384 470 415'],
    heat: '602 315 600 300 585 350 560 320 340 735 345 745 335 760 325 745',
    pts: '638 268 644 278 650 278 690 295 711 321 759 340 771 371 680 333 631 326 598 330 582 376 600 390 612 412 609 430 612 455 610 443 542 492 550 332 538 340 522 347 510 370 492 384 478 360 470 417 459 393 444 367 432 384 398 408 370 408 333 410 324 455 340 478 315 470 296 482 283 500 324 559 283 588 248 663 166 681 192 682 208 705 233 715 265 703 305 705 365 699 372 694 392 693 379 692 400 712 377 727 372 744 357 750 350 765 365 780 338 789 307 804 276 816 274 799 264 832 243 845 260 878 246 892 238 892 225 914 258 914 238 953 173 916 140 924 108 904 84 919 60 945 49 976 30 976 41 1005' },
  { x: 880, y: 330,
    land: ['522 315 508 287 500 258 485 240 486 225 470 200 459 193 450 205 430 198 401 200 360 200 300 188 291 195 291 222 285 250 265 270 260 285 267 297 274 312 268 337 289 350 289 370 300 398 265 410 262 425 290 420 275 450 307 437 372 435 390 440 386 480 395 492 360 507 315 510 285 522 272 545 275 563 275 585 312 607 275 600 246 607 255 625 234 640 200 640 200 655 235 670 228 685 200 710 231 722 262 728 270 700 300 705 313 722 280 740 285 760 310 774 336 750 365 725 392 738 388 770 390 795 410 812 442 806 500 802 540 800 580 792 575 815 560 825 590 830 607 826 600 860 576 858 548 858 519 875 485 858 478 877 455 900 455 990 910 990 910 300 522 300',
      '220 490 240 479 258 484 250 498 230 500', '190 548 205 542 212 545 200 556', '140 598 165 590 182 594 165 605 145 604', '225 598 240 610 250 625 232 618', '178 712 190 696 202 692 195 710', '160 315 172 300 176 296 172 312', '158 390 175 377 205 382 180 400', '348 455 360 448 356 462', '362 470 385 450 386 485 366 488', '320 800 335 785 355 785 350 810 335 812', '290 858 330 865 358 885 340 884', '250 225 270 240 255 250', '210 205 235 215 220 222', '270 705 290 712 280 730', '350 760 365 760 355 775', '270 380 285 370 285 392', '365 890 382 885 385 900 370 900', '280 585 300 600 306 598 284 578'],
    road: ['522 315 528 287 509 287 500 258 480 245 486 225 478 205 459 197 450 217 430 207 401 202 380 225 350 243 320 232 291 222 289 250 265 270 260 285 267 297 274 312 300 295 320 300 318 320 295 345 294 365 305 398 307 433 274 455 258 450 265 430 240 420 243 440', '291 193 317 200 335 232', '307 433 340 432 372 435 392 440 388 475 397 492 360 505 315 508 270 516 283 540 300 548 312 570 325 585 320 605 348 603', '272 545 275 563 280 578', '322 605 310 616 275 600 246 607 255 630 234 638 200 655 182 634 200 630', '200 655 235 670 228 683 210 700 195 715', '210 700 231 720 255 728 270 700 285 695 300 705 313 722 280 740 282 755 310 774 336 747 350 732 365 725 392 738 388 770 350 780 368 800 390 790 410 810 442 806 500 802 540 800 560 786 600 792 617 820 607 836 598 865 576 855 545 875 519 875 485 858 478 877 455 900 440 925', '240 210 240 232 205 240 220 235 243 250 235 262 216 271 205 300 202 322', '168 397 190 394 222 394 233 370 248 380 248 402 265 415 293 408 289 370'],
    heat: '170 397 200 640 205 670 215 690 215 620',
    pts: '317 210 291 222 401 202 459 197 485 224 500 258 509 287 540 255 220 237 222 228 240 232 243 250 216 271 209 316 202 322 218 322 258 277 269 267 265 297 274 312 252 320 252 337 269 337 320 300 289 370 305 398 293 408 307 433 190 394 233 370 216 392 224 395 248 402 265 415 256 412 243 440 274 455 372 435 397 492 360 505 315 508 308 513 283 518 283 534 290 526 274 563 348 603 246 607 234 638 182 634 200 630 216 661 232 669 219 686 228 683 202 708 212 702 231 720 255 728 313 722 310 774 336 747 365 725 392 738 366 770 378 776 390 788 375 783 368 800 412 810 405 809 395 806 442 806 471 806 500 802 530 802 542 800 564 788 557 790 582 792 599 796 593 801 607 836 576 855 548 855 570 865 519 875' },
  { x: 850, y: 570,
    land: ['570 157 543 183 545 205 531 216 519 239 522 257 547 262 525 290 517 310 518 345 496 362 465 370 440 395 421 413 415 440 350 466 380 460 426 452 445 470 436 495 452 510 445 520 400 534 365 545 383 560 388 590 398 596 390 612 395 622 425 620 422 635 402 640 355 648 321 636 297 638 280 620 240 625 180 665 175 690 175 705 180 720 197 712 234 704 287 700 335 704 400 690 415 690 400 712 365 712 355 735 330 744 290 757 240 782 400 880 910 880 910 157',
      '385 142 410 142 450 158 448 172 425 160', '455 175 468 166 476 172 462 188', '478 192 487 184 495 190 490 197', '410 90 430 68 445 80 440 94 420 94', '308 603 316 613 323 600 318 628', '135 730 155 712 155 720', '484 325 495 330 498 350 485 342', '650 98 690 82 695 100 680 108'],
    road: ['568 157 543 183 547 200 531 216 519 239 522 257 547 260 545 275 525 292 517 310 515 350 496 366 475 375 457 387 421 413 415 440 380 450 348 467', '426 443 462 425 470 405 485 405 501 423 511 436 540 437', '457 387 445 402 421 413', '628 435 582 453 541 463 520 474 501 465 477 470 453 457 446 474 436 495 452 510 448 520 415 520 400 534 375 545 355 543 358 555 383 560 388 575 390 590 404 592 390 612 373 622 415 615 427 625 415 638 402 642 355 650 321 636 297 641 272 636 274 612', '272 636 268 658 254 678 234 697 230 670 222 647 207 663 210 680 175 688 173 705 180 720 197 708 234 696 287 693 335 696 380 685 428 675 429 685 405 712 380 722 342 742 310 755 295 766 270 785'],
    heat: '425 485 415 500 430 470 400 520 210 770 200 790 190 775',
    pts: '568 157 543 183 534 222 527 214 531 216 519 239 540 250 522 257 547 260 517 310 496 366 457 387 445 402 421 413 462 423 426 443 392 447 380 450 501 423 511 436 582 453 541 453 520 474 501 465 477 470 453 457 446 474 436 495 400 534 383 560 388 575 400 592 398 594 388 590 390 612 373 622 402 642 321 636 297 641 272 636 254 678 207 663 234 697 175 700 175 706 197 708 287 693 335 696 429 685 342 742 295 766' },
  { x: 850, y: 750,
    land: ['415 150 390 172 365 175 355 195 330 205 290 218 240 242 212 268 195 290 202 310 217 318 245 330 270 335 275 358 290 362 325 358 340 332 373 335 467 300 430 318 420 350 395 356 378 371 345 390 312 414 305 440 280 448 250 460 293 452 375 424 433 408 481 374 508 380 500 398 462 418 425 440 415 460 385 478 407 474 430 462 470 450 440 492 400 520 417 527 450 495 480 490 527 478 540 505 575 480 599 480 650 468 681 485 700 462 750 440 750 460 765 460 770 432 830 410 870 395 895 360 890 345 942 345 1000 345 1000 150',
      '488 540 505 520 535 505 515 528', '480 515 500 505 520 512', '355 437 385 424 398 430 375 438', '885 320 930 312 920 330 890 335', '147 355 158 352 150 360', '240 378 256 378 250 384', '355 490 372 495 380 500'],
    road: ['295 226 260 260 242 270 212 272 195 290 202 305 217 318 234 333 245 317 270 314 275 345 290 362 325 355 335 328 360 322 373 330 420 312 467 298 426 322 418 355 395 354 378 369 345 388 309 412 309 436 293 450 275 446', '210 285 232 294 250 285', '420 312 440 303 467 298', '293 450 338 432 375 420 400 410 433 405 465 390 481 370 508 380 515 395 510 406 462 430 430 440 425 460 407 471 385 480', '430 458 480 445', '425 462 450 450 487 440 460 465 440 495 424 505 400 520 390 532 417 525', '440 495 480 490 500 475 527 472 545 490 575 478 599 468 650 463 665 470 681 483 700 460 700 435 730 432 755 426 785 415 815 435 810 403 827 392', '424 505 445 495', '575 505 588 510 602 495 600 485 585 485 575 505'],
    heat: '',
    pts: '242 270 208 276 213 273 195 290 205 285 202 296 201 305 232 294 217 318 234 333 270 314 289 360 277 358 373 330 467 298 426 322 395 354 378 369 348 385 345 390 340 387 309 412 309 436 293 450 338 432 375 420 433 405 481 370 508 380 510 406 462 430 487 440 407 471 424 505 400 520 417 525 462 492 480 491 527 472 545 490 563 495 575 478 548 505 543 508 556 489 599 468 681 483 700 462 710 452 755 426 815 435 810 403' }
];

const pairs = (tile, s) => {
  const n = s ? s.split(' ').map(Number) : [], out = [];
  for (let i = 0; i < n.length; i += 2) out.push([tile.x + n[i] / 3 - OX, tile.y + n[i + 1] / 3 - OY]);
  return out;
};
const points = tiles.flatMap(t => pairs(t, t.pts));
const sources = points.concat(tiles.flatMap(t => pairs(t, t.heat)));

// Quartic kernel density; the kernel is stretched northwards by the projection.
const W = 500, H = 918, X0 = 570;
const field = new Float32Array(W * H);
for (const [px, py] of sources) {
  const rx = 40, ry = 70 - 7 * py / 918;
  for (let y = Math.max(0, Math.floor(py - ry)); y < Math.min(H, py + ry); y++) {
    for (let x = Math.floor(px - rx) - X0; x < px + rx - X0; x++) {
      const dx = (x + X0 - px) / rx, dy = (y - py) / ry, d = dx * dx + dy * dy;
      if (d < 1 && x >= 0 && x < W) field[y * W + x] += (1 - d) * (1 - d) + 0.0005;
    }
  }
}
const ramp = [[0, 244, 250, 242], [.13, 229, 245, 224], [.26, 199, 233, 192], [.39, 161, 217, 155], [.52, 116, 196, 118], [.65, 65, 171, 93], [.78, 35, 139, 69], [.9, 0, 109, 44], [1, 0, 68, 27]];
const GAIN = 15;
const img = ctx.createImageData(W, H);
for (let i = 0; i < W * H; i++) {
  if (!field[i]) continue;
  const v = Math.min(1, field[i] / GAIN);
  let k = 1;
  while (ramp[k][0] < v) k++;
  const a = ramp[k - 1], b = ramp[k], t = (v - a[0]) / (b[0] - a[0]);
  for (let c = 0; c < 3; c++) img.data[i * 4 + c] = a[c + 1] + (b[c + 1] - a[c + 1]) * t;
  img.data[i * 4 + 3] = 255;
}
ctx.fillStyle = '#fff';
ctx.fillRect(0, 0, canvas.width, canvas.height);
ctx.putImageData(img, X0, 0);
// Pixels outside the kernel are transparent in the raster and fall through to the page's white.

// Small repeatable offsets keep coastline and road from looking ruled.
let seed = 7;
const rnd = () => (seed = seed * 16807 % 2147483647) / 2147483647 - .5;
const rough = (pts, step, amp) => {
  const out = [pts[0]];
  for (let i = 1; i < pts.length; i++) {
    const [ax, ay] = pts[i - 1], [bx, by] = pts[i];
    const n = Math.max(1, Math.round(Math.hypot(bx - ax, by - ay) / step));
    for (let k = 1; k <= n; k++) {
      const j = k < n ? amp : 0;
      out.push([ax + (bx - ax) * k / n + rnd() * j, ay + (by - ay) * k / n + rnd() * j]);
    }
  }
  return out;
};
const trace = pts => { ctx.beginPath(); pts.forEach(p => ctx.lineTo(p[0], p[1])); };

for (const t of tiles) for (const s of t.land) { trace(rough(pairs(t, s), 2.5, 2.2)); ctx.closePath(); ctx.fill(); }

ctx.lineJoin = 'round';
ctx.lineCap = 'round';
const roads = tiles.flatMap(t => t.road.map(s => rough(pairs(t, s), 4, 1.8)));
ctx.strokeStyle = '#4f2d10';
ctx.lineWidth = 4;
for (const r of roads) { trace(r); ctx.stroke(); }
ctx.strokeStyle = '#a47a55';
ctx.lineCap = 'butt';
ctx.lineWidth = 1.1;
ctx.setLineDash([2.5, 2]);
for (const r of roads) { trace(r); ctx.stroke(); }
ctx.setLineDash([]);

ctx.fillStyle = '#78cdc3';
ctx.strokeStyle = '#243c40';
ctx.lineWidth = 1;
for (const [x, y] of points) { ctx.beginPath(); ctx.arc(x, y, 3.8, 0, 7); ctx.fill(); ctx.stroke(); }
```
